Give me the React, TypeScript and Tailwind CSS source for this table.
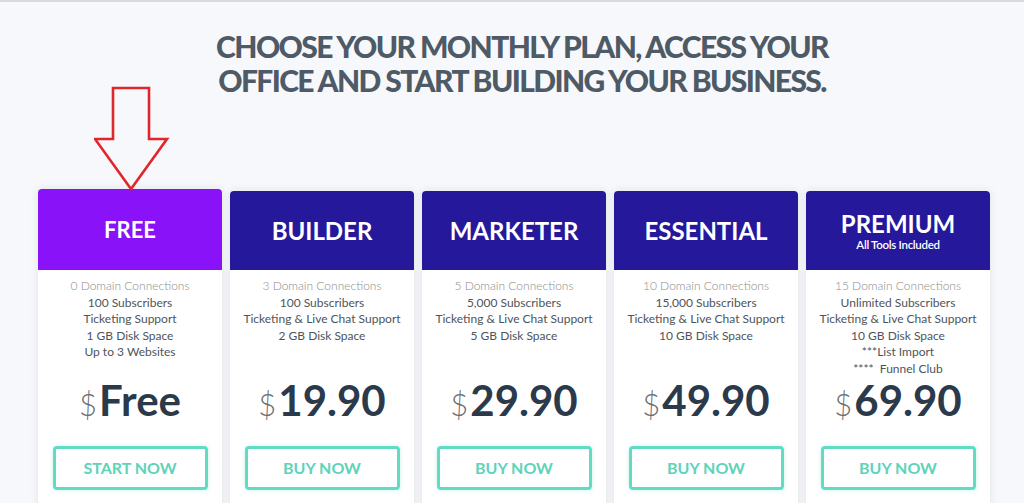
const plans = [
  {
    name: "FREE",
    free: true,
    features: ["0 Domain Connections", "100 Subscribers", "Ticketing Support", "1 GB Disk Space", "Up to 3 Websites"],
    price: "Free",
    cta: "START NOW",
  },
  {
    name: "BUILDER",
    features: ["3 Domain Connections", "100 Subscribers", "Ticketing & Live Chat Support", "2 GB Disk Space"],
    price: "19.90",
    cta: "BUY NOW",
  },
  {
    name: "MARKETER",
    features: ["5 Domain Connections", "5,000 Subscribers", "Ticketing & Live Chat Support", "5 GB Disk Space"],
    price: "29.90",
    cta: "BUY NOW",
  },
  {
    name: "ESSENTIAL",
    features: ["10 Domain Connections", "15,000 Subscribers", "Ticketing & Live Chat Support", "10 GB Disk Space"],
    price: "49.90",
    cta: "BUY NOW",
  },
  {
    name: "PREMIUM",
    sub: "All Tools Included",
    features: [
      "15 Domain Connections",
      "Unlimited Subscribers",
      "Ticketing & Live Chat Support",
      "10 GB Disk Space",
      "***List Import",
      "****  Funnel Club",
    ],
    price: "69.90",
    cta: "BUY NOW",
  },
];

type Plan = (typeof plans)[number] & { free?: boolean; sub?: string };

function DownArrow() {
  return (
    <svg
      className="absolute left-[94px] top-[84px]"
      width="76"
      height="108"
      viewBox="94 84 76 108"
      fill="none"
    >
      <path
        d="M113 86 L149 86 L149 137 L167 137 L131 187 L95 137 L113 137 Z"
        stroke="#e0262b"
        strokeWidth="2.6"
        strokeLinejoin="miter"
      />
    </svg>
  );
}

function PlanCard({ plan }: { plan: Plan }) {
  return (
    <div className="w-[184px] bg-white rounded-t-[4px] shadow-[0_0_8px_rgba(30,40,60,0.1)] flex flex-col">
      {/* Header */}
      <div
        className={`rounded-t-[4px] flex flex-col items-center justify-center text-white ${
          plan.free ? "h-[81px] bg-[#8a12f8]" : "h-[79px] bg-[#25189b]"
        }`}
      >
        <div
          className={`font-bold leading-none ${
            plan.free ? "text-[22px] mt-[1px]" : "text-[24px] mt-[1px]"
          } ${plan.sub ? "-mt-[6px]" : ""}`}
        >
          {plan.name}
        </div>
        {plan.sub && (
          <div className="text-[11.5px] font-semibold leading-none mt-[3px] tracking-[-0.3px]">{plan.sub}</div>
        )}
      </div>

      {/* Features */}
      <div className="pt-[8px] h-[109px] text-center text-[12px] leading-[16.5px]">
        {plan.features.map((f, i) => (
          <div
            key={f}
            className={i === 0 ? "font-light text-[#8c8c8c]" : "text-[#4f5459] whitespace-pre"}
          >
            {f}
          </div>
        ))}
      </div>

      {/* Price */}
      <div className="flex items-baseline justify-center h-[42px] leading-none">
        <span className="text-[31px] font-light text-[#6b6f73] mr-[2px]">$</span>
        <span className="text-[42px] font-bold text-[#2b3a4b]">{plan.price}</span>
      </div>

      {/* Button */}
      <div className="pt-[25px] pb-[20px]">
        <button className="block mx-auto w-[155px] h-[44px] rounded-[4px] border-[3px] border-[#62dbc3] text-[#5ed3b8] font-bold text-[16px] shadow-[0_0_4px_rgba(98,219,195,0.35)]">
          {plan.cta}
        </button>
      </div>
    </div>
  );
}

export default function App() {
  return (
    <div
      className="relative w-[1024px] h-[503px] overflow-hidden bg-[#f7f8fb] border-t-2 border-[#d8dae0]"
      style={{ fontFamily: "Lato, 'Noto Sans', sans-serif" }}
    >
      <h1 className="pt-[27px] pl-[20px] text-center text-[30px] leading-[34px] font-black text-[#4e5a66] tracking-[-1.6px]">
        CHOOSE YOUR MONTHLY PLAN, ACCESS YOUR
        <br />
        OFFICE AND START BUILDING YOUR BUSINESS.
      </h1>

      <div className="mt-[92px] ml-[38px] flex items-start gap-[8px]">
        {plans.map((p) => (
          <div key={p.name} className={p.name === "FREE" ? "" : "mt-[2px]"}>
            <PlanCard plan={p as Plan} />
          </div>
        ))}
      </div>

      <DownArrow />
    </div>
  );
}
